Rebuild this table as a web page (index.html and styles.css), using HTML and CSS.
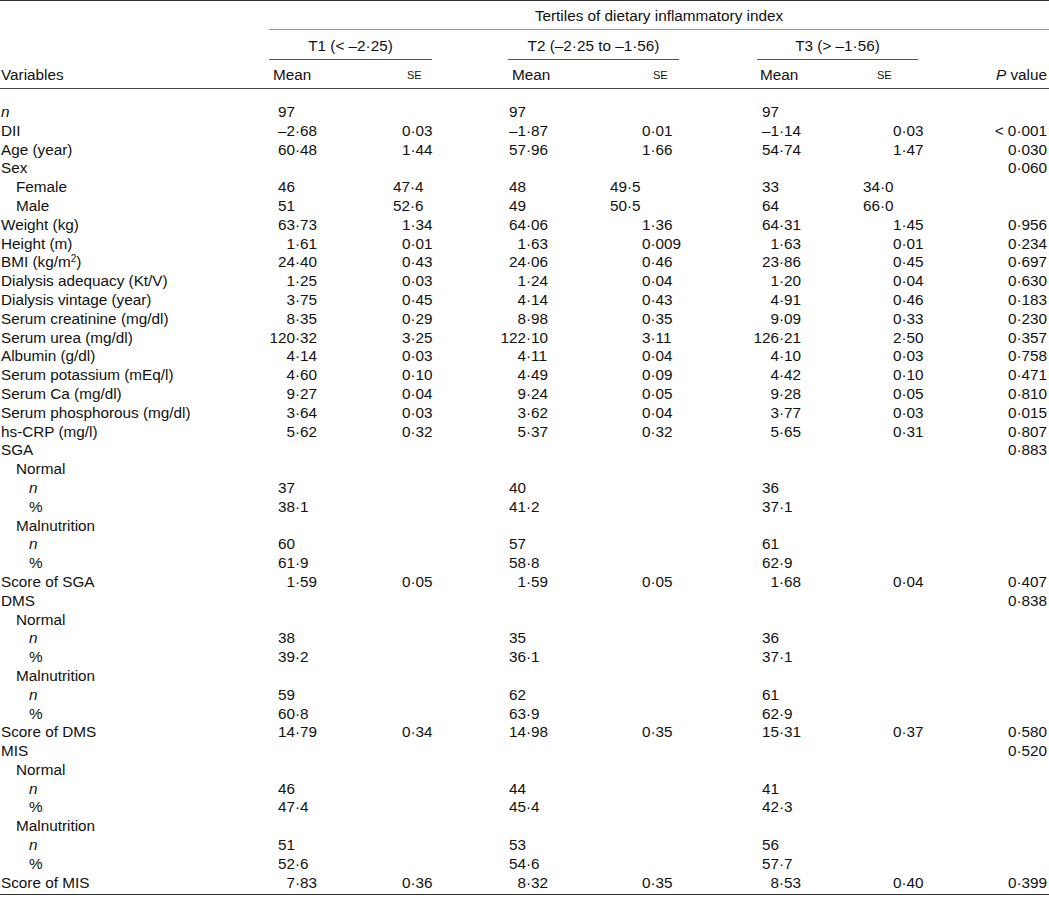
FILE: index.html
```html
<!DOCTYPE html>
<html>
<head>
<meta charset="utf-8">
<link rel="stylesheet" href="styles.css">
</head>
<body>
<div class="tbl">
  <div class="hrow hrow-a">
    <div class="span-all">Tertiles of dietary inflammatory index</div>
  </div>
  <div class="hrow hrow-b">
    <div class="grp g1"><span class="gl">T1 (&lt; –2·25)</span></div>
    <div class="grp g2"><span class="gl">T2 (–2·25 to –1·56)</span></div>
    <div class="grp g3"><span class="gl">T3 (&gt; –1·56)</span></div>
  </div>
  <div class="row hrow-c">
    <div class="lbl">Variables</div>
    <div class="mh m1">Mean</div><div class="seh s1">se</div>
    <div class="mh m2">Mean</div><div class="seh s2">se</div>
    <div class="mh m3">Mean</div><div class="seh s3">se</div>
    <div class="p"><i>P</i> value</div>
  </div>
  <div class="body">
    <div class="row"><div class="lbl"><i>n</i></div><div class="c"><span class="cnt">97</span></div><div class="c"></div><div class="c"><span class="cnt">97</span></div><div class="c"></div><div class="c"><span class="cnt">97</span></div><div class="c"></div><div class="p"></div></div>
    <div class="row"><div class="lbl">DII</div><div class="c"><span class="i">–2</span>·68</div><div class="c se1">0·03</div><div class="c"><span class="i">–1</span>·87</div><div class="c se2">0·01</div><div class="c"><span class="i">–1</span>·14</div><div class="c se3">0·03</div><div class="p">&lt; 0·001</div></div>
    <div class="row"><div class="lbl">Age (year)</div><div class="c"><span class="i">60</span>·48</div><div class="c se1">1·44</div><div class="c"><span class="i">57</span>·96</div><div class="c se2">1·66</div><div class="c"><span class="i">54</span>·74</div><div class="c se3">1·47</div><div class="p">0·030</div></div>
    <div class="row"><div class="lbl">Sex</div><div class="c"></div><div class="c"></div><div class="c"></div><div class="c"></div><div class="c"></div><div class="c"></div><div class="p">0·060</div></div>
    <div class="row"><div class="lbl l1">Female</div><div class="c"><span class="cnt">46</span></div><div class="c">47·4</div><div class="c"><span class="cnt">48</span></div><div class="c">49·5</div><div class="c"><span class="cnt">33</span></div><div class="c">34·0</div><div class="p"></div></div>
    <div class="row"><div class="lbl l1">Male</div><div class="c"><span class="cnt">51</span></div><div class="c">52·6</div><div class="c"><span class="cnt">49</span></div><div class="c">50·5</div><div class="c"><span class="cnt">64</span></div><div class="c">66·0</div><div class="p"></div></div>
    <div class="row"><div class="lbl">Weight (kg)</div><div class="c"><span class="i">63</span>·73</div><div class="c se1">1·34</div><div class="c"><span class="i">64</span>·06</div><div class="c se2">1·36</div><div class="c"><span class="i">64</span>·31</div><div class="c se3">1·45</div><div class="p">0·956</div></div>
    <div class="row"><div class="lbl">Height (m)</div><div class="c"><span class="i">1</span>·61</div><div class="c se1">0·01</div><div class="c"><span class="i">1</span>·63</div><div class="c se2">0·009</div><div class="c"><span class="i">1</span>·63</div><div class="c se3">0·01</div><div class="p">0·234</div></div>
    <div class="row"><div class="lbl">BMI (kg/m<sup>2</sup>)</div><div class="c"><span class="i">24</span>·40</div><div class="c se1">0·43</div><div class="c"><span class="i">24</span>·06</div><div class="c se2">0·46</div><div class="c"><span class="i">23</span>·86</div><div class="c se3">0·45</div><div class="p">0·697</div></div>
    <div class="row"><div class="lbl">Dialysis adequacy (Kt/V)</div><div class="c"><span class="i">1</span>·25</div><div class="c se1">0·03</div><div class="c"><span class="i">1</span>·24</div><div class="c se2">0·04</div><div class="c"><span class="i">1</span>·20</div><div class="c se3">0·04</div><div class="p">0·630</div></div>
    <div class="row"><div class="lbl">Dialysis vintage (year)</div><div class="c"><span class="i">3</span>·75</div><div class="c se1">0·45</div><div class="c"><span class="i">4</span>·14</div><div class="c se2">0·43</div><div class="c"><span class="i">4</span>·91</div><div class="c se3">0·46</div><div class="p">0·183</div></div>
    <div class="row"><div class="lbl">Serum creatinine (mg/dl)</div><div class="c"><span class="i">8</span>·35</div><div class="c se1">0·29</div><div class="c"><span class="i">8</span>·98</div><div class="c se2">0·35</div><div class="c"><span class="i">9</span>·09</div><div class="c se3">0·33</div><div class="p">0·230</div></div>
    <div class="row"><div class="lbl">Serum urea (mg/dl)</div><div class="c"><span class="i">120</span>·32</div><div class="c se1">3·25</div><div class="c"><span class="i">122</span>·10</div><div class="c se2">3·11</div><div class="c"><span class="i">126</span>·21</div><div class="c se3">2·50</div><div class="p">0·357</div></div>
    <div class="row"><div class="lbl">Albumin (g/dl)</div><div class="c"><span class="i">4</span>·14</div><div class="c se1">0·03</div><div class="c"><span class="i">4</span>·11</div><div class="c se2">0·04</div><div class="c"><span class="i">4</span>·10</div><div class="c se3">0·03</div><div class="p">0·758</div></div>
    <div class="row"><div class="lbl">Serum potassium (mEq/l)</div><div class="c"><span class="i">4</span>·60</div><div class="c se1">0·10</div><div class="c"><span class="i">4</span>·49</div><div class="c se2">0·09</div><div class="c"><span class="i">4</span>·42</div><div class="c se3">0·10</div><div class="p">0·471</div></div>
    <div class="row"><div class="lbl">Serum Ca (mg/dl)</div><div class="c"><span class="i">9</span>·27</div><div class="c se1">0·04</div><div class="c"><span class="i">9</span>·24</div><div class="c se2">0·05</div><div class="c"><span class="i">9</span>·28</div><div class="c se3">0·05</div><div class="p">0·810</div></div>
    <div class="row"><div class="lbl">Serum phosphorous (mg/dl)</div><div class="c"><span class="i">3</span>·64</div><div class="c se1">0·03</div><div class="c"><span class="i">3</span>·62</div><div class="c se2">0·04</div><div class="c"><span class="i">3</span>·77</div><div class="c se3">0·03</div><div class="p">0·015</div></div>
    <div class="row"><div class="lbl">hs-CRP (mg/l)</div><div class="c"><span class="i">5</span>·62</div><div class="c se1">0·32</div><div class="c"><span class="i">5</span>·37</div><div class="c se2">0·32</div><div class="c"><span class="i">5</span>·65</div><div class="c se3">0·31</div><div class="p">0·807</div></div>

    <div class="row"><div class="lbl">SGA</div><div class="c"></div><div class="c"></div><div class="c"></div><div class="c"></div><div class="c"></div><div class="c"></div><div class="p">0·883</div></div>
    <div class="row"><div class="lbl l1">Normal</div></div>
    <div class="row"><div class="lbl l2"><i>n</i></div><div class="c"><span class="cnt">37</span></div><div class="c"></div><div class="c"><span class="cnt">40</span></div><div class="c"></div><div class="c"><span class="cnt">36</span></div></div>
    <div class="row"><div class="lbl l2">%</div><div class="c"><span class="cnt">38·1</span></div><div class="c"></div><div class="c"><span class="cnt">41·2</span></div><div class="c"></div><div class="c"><span class="cnt">37·1</span></div></div>
    <div class="row"><div class="lbl l1">Malnutrition</div></div>
    <div class="row"><div class="lbl l2"><i>n</i></div><div class="c"><span class="cnt">60</span></div><div class="c"></div><div class="c"><span class="cnt">57</span></div><div class="c"></div><div class="c"><span class="cnt">61</span></div></div>
    <div class="row"><div class="lbl l2">%</div><div class="c"><span class="cnt">61·9</span></div><div class="c"></div><div class="c"><span class="cnt">58·8</span></div><div class="c"></div><div class="c"><span class="cnt">62·9</span></div></div>
    <div class="row"><div class="lbl">Score of SGA</div><div class="c"><span class="i">1</span>·59</div><div class="c se1">0·05</div><div class="c"><span class="i">1</span>·59</div><div class="c se2">0·05</div><div class="c"><span class="i">1</span>·68</div><div class="c se3">0·04</div><div class="p">0·407</div></div>

    <div class="row"><div class="lbl">DMS</div><div class="c"></div><div class="c"></div><div class="c"></div><div class="c"></div><div class="c"></div><div class="c"></div><div class="p">0·838</div></div>
    <div class="row"><div class="lbl l1">Normal</div></div>
    <div class="row"><div class="lbl l2"><i>n</i></div><div class="c"><span class="cnt">38</span></div><div class="c"></div><div class="c"><span class="cnt">35</span></div><div class="c"></div><div class="c"><span class="cnt">36</span></div></div>
    <div class="row"><div class="lbl l2">%</div><div class="c"><span class="cnt">39·2</span></div><div class="c"></div><div class="c"><span class="cnt">36·1</span></div><div class="c"></div><div class="c"><span class="cnt">37·1</span></div></div>
    <div class="row"><div class="lbl l1">Malnutrition</div></div>
    <div class="row"><div class="lbl l2"><i>n</i></div><div class="c"><span class="cnt">59</span></div><div class="c"></div><div class="c"><span class="cnt">62</span></div><div class="c"></div><div class="c"><span class="cnt">61</span></div></div>
    <div class="row"><div class="lbl l2">%</div><div class="c"><span class="cnt">60·8</span></div><div class="c"></div><div class="c"><span class="cnt">63·9</span></div><div class="c"></div><div class="c"><span class="cnt">62·9</span></div></div>
    <div class="row"><div class="lbl">Score of DMS</div><div class="c"><span class="i">14</span>·79</div><div class="c se1">0·34</div><div class="c"><span class="i">14</span>·98</div><div class="c se2">0·35</div><div class="c"><span class="i">15</span>·31</div><div class="c se3">0·37</div><div class="p">0·580</div></div>

    <div class="row"><div class="lbl">MIS</div><div class="c"></div><div class="c"></div><div class="c"></div><div class="c"></div><div class="c"></div><div class="c"></div><div class="p">0·520</div></div>
    <div class="row"><div class="lbl l1">Normal</div></div>
    <div class="row"><div class="lbl l2"><i>n</i></div><div class="c"><span class="cnt">46</span></div><div class="c"></div><div class="c"><span class="cnt">44</span></div><div class="c"></div><div class="c"><span class="cnt">41</span></div></div>
    <div class="row"><div class="lbl l2">%</div><div class="c"><span class="cnt">47·4</span></div><div class="c"></div><div class="c"><span class="cnt">45·4</span></div><div class="c"></div><div class="c"><span class="cnt">42·3</span></div></div>
    <div class="row"><div class="lbl l1">Malnutrition</div></div>
    <div class="row"><div class="lbl l2"><i>n</i></div><div class="c"><span class="cnt">51</span></div><div class="c"></div><div class="c"><span class="cnt">53</span></div><div class="c"></div><div class="c"><span class="cnt">56</span></div></div>
    <div class="row"><div class="lbl l2">%</div><div class="c"><span class="cnt">52·6</span></div><div class="c"></div><div class="c"><span class="cnt">54·6</span></div><div class="c"></div><div class="c"><span class="cnt">57·7</span></div></div>
    <div class="row"><div class="lbl">Score of MIS</div><div class="c"><span class="i">7</span>·83</div><div class="c se1">0·36</div><div class="c"><span class="i">8</span>·32</div><div class="c se2">0·35</div><div class="c"><span class="i">8</span>·53</div><div class="c se3">0·40</div><div class="p">0·399</div></div>
  </div>
</div>
</body>
</html>
```

FILE: styles.css
```css
html, body {
  margin: 0;
  padding: 0;
  background: #ffffff;
}

body {
  font-family: "Liberation Sans", Arial, Helvetica, sans-serif;
  font-size: 15.3px;
  color: #111;
}

.tbl {
  width: 1049px;
  border-top: 1.5px solid #333;
  border-bottom: 1.5px solid #333;
}

.hrow-a {
  height: 28.5px;
  display: flex;
  padding-left: 269px;
}

.span-all {
  flex: 1;
  text-align: center;
  line-height: 28px;
  padding-top: 1px;
  height: 27px;
  border-bottom: 1px solid #9a9a9a;
}

.hrow-b {
  height: 30px;
  display: grid;
  grid-template-columns: 269px 231px 253px 1fr;
}

.grp {
  display: flex;
  align-items: flex-end;
}

.g1 { grid-column: 2; }
.g2 { grid-column: 3; padding-left: 8px; }
.g3 { grid-column: 4; padding-left: 4px; }

.gl {
  display: block;
  text-align: center;
  line-height: 27px;
  border-bottom: 1px solid #555;
}

.g1 .gl { width: 163px; }
.g2 .gl { width: 171px; }
.g3 .gl { width: 161px; }

.row {
  display: grid;
  grid-template-columns: 269px 124px 107px 110px 143px 110px 107px 1fr;
  height: 18.8px;
  line-height: 18.8px;
  white-space: nowrap;
}

.hrow-c {
  height: 27.5px;
  line-height: 28px;
  padding-top: 1px;
  border-bottom: 1.5px solid #444;
}

.lbl { padding-left: 1px; }
.l1 { padding-left: 16px; }
.l2 { padding-left: 29px; }

.mh.m1 { padding-left: 4px; }
.mh.m2 { padding-left: 12px; }
.mh.m3 { padding-left: 7px; }

.seh {
  font-size: 11px;
  text-transform: uppercase;
}
.seh.s1 { padding-left: 14px; }
.seh.s2 { padding-left: 43px; }
.seh.s3 { padding-left: 14px; }

.p {
  text-align: right;
  padding-right: 2px;
}

.body {
  padding-top: 14px;
  padding-bottom: 2px;
}

.i {
  display: inline-block;
  width: 26px;
  text-align: right;
}

.cnt {
  padding-left: 9px;
}

.se1 { padding-left: 9px; }
.se2 { padding-left: 32px; }
.se3 { padding-left: 30px; }

sup {
  font-size: 10px;
  line-height: 0;
  vertical-align: 5px;
}
```
